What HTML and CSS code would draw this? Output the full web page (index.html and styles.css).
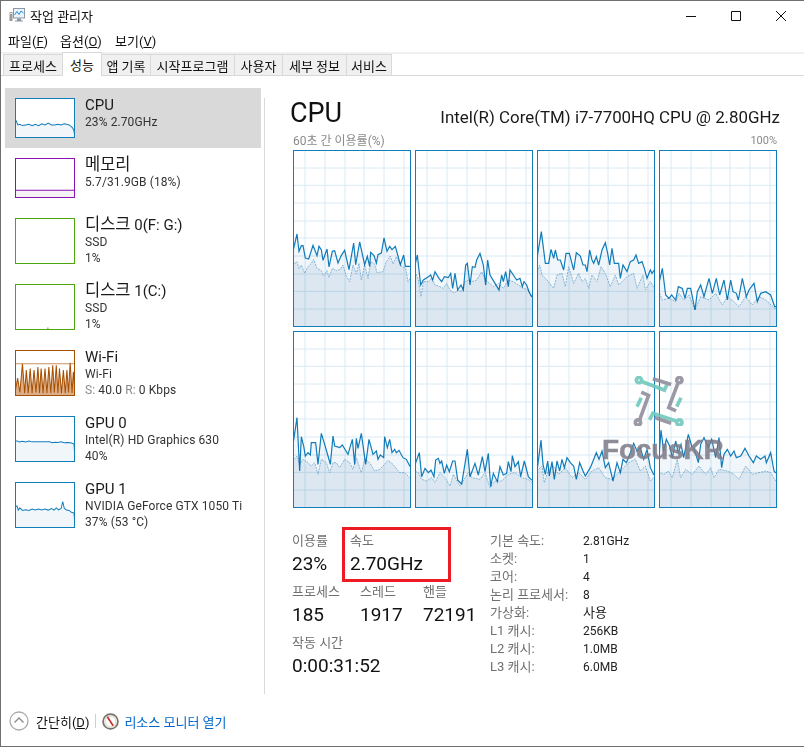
FILE: index.html
```
<!DOCTYPE html>
<html lang="ko">
<head>
<meta charset="utf-8">
<title>작업 관리자</title>
<link rel="stylesheet" href="styles.css">
</head>
<body>
<svg class="defs" aria-hidden="true"><defs><g id="grid" class="grid">
<path d="M36 0V531M96 0V531M156 0V531M213 0V531M273 0V531M333 0V531M0 54H354M0 106H354M0 159H354M0 213H354M0 264H354M0 318H354M0 372H354M0 424H354M0 477H354"/>
</g></defs></svg>
<div class="window">
  <header class="titlebar">
    <svg class="app-icon" viewBox="0 0 16 15"><rect x="0.5" y="4" width="3" height="9" fill="#9a9a9a"/><rect x="1" y="5" width="2" height="1" fill="#e8e8e8"/><rect x="4.5" y="0.5" width="11" height="9.5" fill="#eaf3fa" stroke="#8b98a3"/><path d="M5.5 7L8 3.5L10 6.5L12 3L14.5 5" fill="none" stroke="#2b8fd6"/><path d="M8 10.5h4v2h2v1H6v-1h2z" fill="#8b98a3"/></svg>
    <span class="title">작업 관리자</span>
    <div class="controls">
      <svg class="ctl" viewBox="0 0 10 10"><path d="M0 5.5H10"/></svg>
      <svg class="ctl" viewBox="0 0 10 10"><path d="M.5 .5H9.5V9.5H.5Z"/></svg>
      <svg class="ctl" viewBox="0 0 10 10"><path d="M0 0L10 10M10 0L0 10"/></svg>
    </div>
  </header>
  <nav class="menu"><span class="m1">파일(<u>F</u>)</span><span class="m2">옵션(<u>O</u>)</span><span>보기(<u>V</u>)</span></nav>
  <div class="tabs">
    <span class="tab t1">프로세스</span><span class="tab t2 active">성능</span><span class="tab t3">앱 기록</span><span class="tab t4">시작프로그램</span><span class="tab t5">사용자</span><span class="tab t6">세부 정보</span><span class="tab t7">서비스</span>
  </div>
  <main class="main">
    <aside class="side">
      <div class="item selected">
        <svg class="thumb blue short" viewBox="0 0 180 120" preserveAspectRatio="none"><polyline class="t-blue" points="-4,130 -4,68 0,68 6,82 12,80 20,84 30,82 40,80 50,84 60,80 70,84 80,78 90,82 100,76 110,82 120,82 130,80 140,82 150,78 165,82 175,90 180,100 184,130"/></svg>
        <div class="info"><div class="name">CPU</div><div class="sub">23% 2.70GHz</div></div>
      </div>
      <div class="item">
        <svg class="thumb purple short" viewBox="0 0 180 120" preserveAspectRatio="none"><rect x="-4" y="99" width="190" height="30" class="t-purple"/></svg>
        <div class="info"><div class="name"><span class="ko">메모리</span></div><div class="sub">5.7/31.9GB (18%)</div></div>
      </div>
      <div class="item">
        <svg class="thumb green" viewBox="0 0 180 138" preserveAspectRatio="none"></svg>
        <div class="info"><div class="name"><span class="ko">디스크</span> 0(F: G:)</div><div class="sub">SSD</div><div class="sub">1%</div></div>
      </div>
      <div class="item">
        <svg class="thumb green" viewBox="0 0 180 138" preserveAspectRatio="none"><path class="t-green" d="M99 138V133"/></svg>
        <div class="info"><div class="name"><span class="ko">디스크</span> 1(C:)</div><div class="sub">SSD</div><div class="sub">1%</div></div>
      </div>
      <div class="item">
        <svg class="thumb brown" viewBox="0 0 180 138" preserveAspectRatio="none"><path class="t-brown-line" d="M0 40H180"/><polyline class="t-brown" points="-4,145 -4,135 5,85 12,130 20,40 27,132 32,60 38,132 44,55 50,132 56,60 62,130 68,50 73,132 78,55 84,132 90,55 96,132 102,50 108,132 114,45 119,130 125,45 130,132 135,55 141,132 147,60 153,132 158,60 163,130 168,37 174,132 178,65 184,145"/></svg>
        <div class="info"><div class="name">Wi-Fi</div><div class="sub">Wi-Fi</div><div class="sub"><span class="dim">S:</span> 40.0 <span class="dim">R:</span> 0 Kbps</div></div>
      </div>
      <div class="item">
        <svg class="thumb blue" viewBox="0 0 180 138" preserveAspectRatio="none"><polyline class="t-blue" points="-4,145 -4,75 4,75 10,78 20,76 30,78 40,75 50,78 60,78 80,78 105,78 112,81 122,79 130,80 140,78 150,81 160,80 170,81 180,85 184,145"/></svg>
        <div class="info"><div class="name">GPU 0</div><div class="sub">Intel(R) HD Graphics 630</div><div class="sub">40%</div></div>
      </div>
      <div class="item">
        <svg class="thumb blue" viewBox="0 0 180 138" preserveAspectRatio="none"><polyline class="t-blue" points="-4,145 -4,75 3,72 7,85 12,78 20,86 30,84 40,86 50,82 60,85 70,82 80,85 90,82 100,85 110,80 118,85 125,78 132,84 140,80 145,58 150,80 157,85 165,86 172,92 180,94 184,145"/></svg>
        <div class="info"><div class="name">GPU 1</div><div class="sub">NVIDIA GeForce GTX 1050 Ti</div><div class="sub">37% (53 °C)</div></div>
      </div>
    </aside>
    <section class="panel">
      <div class="head"><h1>CPU</h1><span class="model">Intel(R) Core(TM) i7-7700HQ CPU @ 2.80GHz</span></div>
      <div class="axis"><span>60초 간 이용률(%)</span><span class="axis-max">100%</span></div>
      <div class="charts">
        <svg class="chart" viewBox="3 3 348 525"><use href="#grid"/>
          <polyline class="kernel" points="-6,540 -6,344 0,344 12,335 18,355 25,345 35,370 45,350 55,340 62,328 72,355 85,362 92,378 102,362 108,382 118,355 130,362 142,358 150,345 160,378 170,395 180,345 190,372 198,340 205,390 215,345 225,385 233,335 245,342 252,368 270,365 280,335 292,318 300,342 310,320 325,348 338,355 345,395 352,385 360,385 360,540"/>
          <polyline class="total" points="-6,540 -6,304 0,304 12,252 18,304 25,287 30,287 37,324 47,327 60,286 72,317 78,289 85,299 90,331 102,297 108,351 118,304 125,302 135,339 145,316 155,301 168,359 182,279 188,344 200,276 215,344 223,319 230,349 233,307 243,317 250,339 255,314 265,309 273,264 282,304 290,289 297,299 307,289 322,344 332,315 337,349 350,349 360,349 360,540"/></svg>
        <svg class="chart" viewBox="3 3 348 525"><use href="#grid"/>
          <polyline class="kernel" points="-6,540 -6,365 0,365 10,390 18,440 25,395 40,395 50,385 60,405 75,410 85,415 95,400 105,420 118,430 128,420 140,425 150,395 160,390 170,395 185,390 200,365 212,390 218,395 235,410 250,400 265,415 280,390 295,395 310,405 325,415 340,420 350,440 360,440 360,540"/>
          <polyline class="total" points="-6,540 -6,345 0,345 7,315 17,405 25,390 40,380 47,375 53,390 60,365 72,385 80,395 88,380 100,383 107,370 113,415 120,370 128,420 138,405 145,420 152,345 157,340 165,405 172,350 180,352 185,330 195,310 205,345 212,405 218,330 225,375 240,400 252,420 260,375 265,395 272,365 280,410 285,360 295,375 305,390 315,385 322,410 327,395 335,405 342,425 350,440 360,440 360,540"/></svg>
        <svg class="chart" viewBox="3 3 348 525"><use href="#grid"/>
          <polyline class="kernel" points="-6,540 -6,370 0,370 8,345 15,375 30,390 50,415 60,375 75,370 85,410 95,350 110,400 125,370 135,395 145,385 155,415 165,375 180,395 192,350 205,370 220,410 235,375 245,405 270,380 290,370 300,415 318,375 325,420 340,395 352,415 360,415 360,540"/>
          <polyline class="total" points="-6,540 -6,325 0,325 13,245 25,340 35,340 42,298 50,325 55,300 62,330 70,330 80,360 87,310 97,310 110,360 118,308 130,318 138,345 145,345 150,365 158,300 165,330 170,340 178,320 185,345 195,300 205,278 212,310 218,345 225,295 232,340 245,340 250,385 258,345 270,365 280,335 290,330 297,315 305,340 315,335 322,355 330,385 340,360 345,370 352,360 360,400 360,540"/></svg>
        <svg class="chart" viewBox="3 3 348 525"><use href="#grid"/>
          <polyline class="kernel" points="-6,540 -6,425 0,425 10,450 30,445 50,455 60,430 75,450 90,435 108,480 125,440 150,450 170,430 190,465 205,440 225,455 240,470 260,440 280,465 300,440 320,450 347,475 360,475 360,540"/>
          <polyline class="total" points="-6,540 -6,400 0,400 10,355 20,435 30,445 38,435 50,450 58,410 70,415 78,445 85,415 95,415 108,480 115,425 125,405 135,440 150,385 160,430 172,385 182,435 195,390 205,450 215,390 222,425 232,430 238,450 250,385 262,440 270,420 285,400 295,455 305,430 320,425 335,435 347,470 360,470 360,540"/></svg>
        <svg class="chart" viewBox="3 3 348 525"><use href="#grid"/>
          <polyline class="kernel" points="-6,540 -6,390 0,390 12,375 20,400 30,385 45,395 55,405 65,395 75,430 85,385 100,395 110,425 120,395 130,395 140,410 155,385 170,395 180,415 190,380 205,425 215,385 230,395 245,420 260,415 275,400 285,388 300,400 320,425 335,425 350,440 360,440 360,540"/>
          <polyline class="total" points="-6,540 -6,340 0,340 12,260 20,420 25,317 32,345 37,375 45,365 52,372 55,335 68,335 75,400 85,307 95,340 105,375 112,400 120,315 125,345 140,350 148,342 165,370 178,325 185,400 190,322 195,352 205,307 218,400 228,325 240,370 250,360 255,385 262,372 272,380 275,317 283,350 290,325 297,365 305,355 310,365 318,358 330,380 340,385 350,405 360,405 360,540"/></svg>
        <svg class="chart" viewBox="3 3 348 525"><use href="#grid"/>
          <polyline class="kernel" points="-6,540 -6,420 0,420 10,425 20,445 35,450 50,440 60,455 75,425 90,440 105,465 115,430 135,465 160,425 170,440 195,445 210,425 225,470 240,450 260,450 280,430 300,425 320,440 340,445 350,455 360,455 360,540"/>
          <polyline class="total" points="-6,540 -6,400 0,400 5,387 13,365 20,437 30,412 40,425 48,417 57,437 62,387 70,382 75,397 80,390 88,427 95,402 103,422 113,390 120,390 128,447 140,459 157,355 165,437 180,397 190,432 202,377 210,422 220,367 227,467 235,427 247,452 255,407 265,432 275,427 280,392 288,422 292,374 300,407 310,392 317,437 328,390 340,437 350,447 360,447 360,540"/></svg>
        <svg class="chart" viewBox="3 3 348 525"><use href="#grid"/>
          <polyline class="kernel" points="-6,540 -6,420 0,420 15,405 22,455 35,415 50,405 65,430 85,410 105,440 125,425 145,445 165,420 185,410 205,440 225,445 250,420 275,395 295,385 310,420 325,405 340,450 350,440 360,440 360,540"/>
          <polyline class="total" points="-6,540 -6,420 0,420 12,327 18,400 25,430 32,390 37,435 45,392 52,445 60,390 68,420 75,385 82,410 90,380 100,395 110,405 118,445 128,395 138,420 145,435 160,410 172,380 178,365 186,385 195,360 205,410 215,395 228,450 240,395 250,425 258,385 268,395 280,365 290,337 300,360 310,350 320,385 330,355 340,410 350,430 360,430 360,540"/></svg>
        <svg class="chart" viewBox="3 3 348 525"><use href="#grid"/>
          <polyline class="kernel" points="-6,540 -6,425 0,425 15,430 28,420 40,440 55,385 65,440 80,415 100,430 120,405 140,430 155,410 165,440 180,415 205,420 225,430 240,445 260,405 280,430 300,425 320,420 335,425 350,450 360,450 360,540"/>
          <polyline class="total" points="-6,540 -6,380 0,380 6,297 14,360 22,325 32,345 40,380 50,330 58,365 66,340 74,380 88,310 98,345 106,355 118,395 125,340 135,320 148,350 158,325 170,380 180,320 188,410 195,370 205,355 215,375 225,360 232,380 245,375 258,352 270,375 283,395 292,375 305,385 318,375 322,395 335,365 345,420 350,425 360,425 360,540"/></svg>
      </div>
      <div class="stats">
        <div class="stats-left">
          <div class="stat-row">
            <div class="stat w58"><div class="label">이용률</div><div class="value">23%</div></div>
            <div class="stat speed"><div class="label">속도</div><div class="value">2.70GHz</div></div>
          </div>
          <div class="stat-row">
            <div class="stat w68"><div class="label">프로세스</div><div class="value">185</div></div>
            <div class="stat w63"><div class="label">스레드</div><div class="value">1917</div></div>
            <div class="stat"><div class="label">핸들</div><div class="value">72191</div></div>
          </div>
          <div class="stat-row">
            <div class="stat"><div class="label">작동 시간</div><div class="value">0:00:31:52</div></div>
          </div>
        </div>
        <dl class="details">
          <dt>기본 속도:</dt><dd>2.81GHz</dd>
          <dt>소켓:</dt><dd>1</dd>
          <dt>코어:</dt><dd>4</dd>
          <dt>논리 프로세서:</dt><dd>8</dd>
          <dt>가상화:</dt><dd class="dd-ko">사용</dd>
          <dt>L1 캐시:</dt><dd>256KB</dd>
          <dt>L2 캐시:</dt><dd>1.0MB</dd>
          <dt>L3 캐시:</dt><dd>6.0MB</dd>
        </dl>
      </div>
    </section>
  </main>
  <footer class="footer">
    <svg class="chev" viewBox="0 0 20 20"><circle cx="10" cy="10" r="9" fill="#fff" stroke="#ababab" stroke-width="1.3"/><path d="M5.5 11.5L10 7L14.5 11.5" fill="none" stroke="#8a8a8a" stroke-width="1.4"/></svg>
    <span class="fewer">간단히(<u>D</u>)</span>
    <span class="sep"></span>
    <svg class="monitor" viewBox="0 0 16 16"><circle cx="8" cy="8" r="7" fill="#f4f1ec" stroke="#77736d" stroke-width="1.6"/><circle cx="8" cy="8" r="5" fill="#fff" stroke="#cfc8bd" stroke-width=".6"/><path d="M5 3.5L10.5 12" stroke="#c9302c" stroke-width="1.6"/></svg>
    <span class="link">리소스 모니터 열기</span>
  </footer>
  <div class="watermark">
    <svg class="wm-logo" viewBox="100 20 160 150">
      <g class="wm-teal"><circle cx="118" cy="32" r="8"/><path d="M126 36L195 62L204 42M245 85L232 112M125 85L112 112"/><circle cx="240" cy="160" r="8"/><path d="M232 156L160 132L150 152"/></g>
      <g class="wm-gray"><circle cx="240" cy="32" r="8"/><path d="M236 40L208 115L230 125M160 28L215 45"/><circle cx="115" cy="160" r="8"/><path d="M120 152L147 78L125 68M165 145L215 162"/></g>
    </svg>
    <span class="wm-text">FocusKR</span>
  </div>
</div>
</body>
</html>
```

FILE: styles.css
```
*, *::before, *::after { box-sizing: border-box; }
html, body { margin: 0; padding: 0; background: #fff; }
body { font-family: Roboto, "Noto Sans CJK KR", sans-serif; font-size: 12px; color: #1a1a1a; }
.defs { position: absolute; width: 0; height: 0; }
.grid path { fill: none; stroke: #d9eaf4; stroke-width: 1; vector-effect: non-scaling-stroke; }

.window { position: relative; width: 804px; height: 747px; border-top: 1px solid #6f6f6f; border-left: 1px solid #6f6f6f; border-bottom: 1px solid #6f6f6f; display: flex; flex-direction: column; overflow: hidden; }

.titlebar { height: 30px; flex: none; display: flex; align-items: center; padding: 0 0 1px 8px; }
.app-icon { width: 16px; height: 15px; margin-right: 5px; }
.title { font-size: 13px; color: #111; }
.controls { margin-left: auto; display: flex; gap: 35px; padding-right: 18px; }
.ctl { width: 10px; height: 10px; }
.ctl path { fill: none; stroke: #111; stroke-width: 1; }

.menu { height: 18px; flex: none; display: flex; padding-left: 7px; align-items: center; font-size: 13px; color: #111; }
.menu span { white-space: nowrap; }
.m1 { width: 52px; }
.m2 { width: 55px; }

.tabs { margin-top: 3px; height: 24px; flex: none; display: flex; align-items: flex-end; padding-left: 2px; border-top: 2px solid #f0f0f0; border-bottom: 1px solid #d9d9d9; position: relative; }
.tab { height: 21px; display: flex; align-items: center; justify-content: center; background: #f0f0f0; border: 1px solid #d9d9d9; border-bottom: none; margin-left: -1px; font-size: 13px; color: #111; white-space: nowrap; }
.tab.active { height: 24px; background: #fff; position: relative; margin-bottom: -1px; margin-top: -3px; z-index: 1; }
.t1 { width: 60px; margin-left: 0; }
.t2 { width: 40px; }
.t3 { width: 50px; }
.t4 { width: 85px; }
.t5 { width: 49px; }
.t6 { width: 65px; }
.t7 { width: 46px; }

.main { flex: none; height: 624px; display: flex; padding-top: 12px; }
.side { width: 263px; flex: none; padding-left: 4px; }
.item { width: 256px; display: flex; padding: 10px 0 10px 10px; }
.item.selected { background: #d9d9d9; }
.thumb { width: 60px; height: 46px; flex: none; border: 1px solid; background: #fff; margin-right: 10px; overflow: hidden; }
.thumb.short { height: 40px; }
.thumb.blue { border-color: #117dbb; }
.thumb.purple { border-color: #8b12ae; }
.thumb.green { border-color: #4da60c; }
.thumb.brown { border-color: #a74f01; }
.t-blue { fill: #f1f6fa; stroke: #117dbb; stroke-width: 1; vector-effect: non-scaling-stroke; }
.t-purple { fill: #f4f2f4; stroke: #8b12ae; stroke-width: 1; vector-effect: non-scaling-stroke; }
.t-green { stroke: #4da60c; stroke-width: 1; vector-effect: non-scaling-stroke; }
.t-brown { fill: #dcae88; stroke: #a74f01; stroke-width: 1; vector-effect: non-scaling-stroke; }
.t-brown-line { stroke: #c8915f; stroke-width: 1; vector-effect: non-scaling-stroke; }
.info { margin: -4px 0 -4px; white-space: nowrap; min-width: 0; }
.name { font-size: 15px; line-height: 22px; height: 20px; color: #1a1a1a; }
.name .ko { font-size: 16.5px; }
.sub { font-size: 12px; line-height: 16px; color: #333; letter-spacing: .1px; }
.dim { color: #8a8a8a; }

.panel { width: 515px; margin-top: 10px; height: 596px; border-left: 1px solid #d9d9d9; padding-left: 25px; flex: none; }
.head { display: flex; justify-content: space-between; align-items: flex-end; height: 28px; margin-top: 1px; width: 490px; }
.head h1 { margin: 0; font-weight: 400; font-size: 27px; line-height: 28px; color: #111; }
.model { font-size: 16.9px; line-height: 20px; color: #1a1a1a; white-space: nowrap; }
.axis { display: flex; justify-content: space-between; font-size: 12px; line-height: 14px; color: #8a8a8a; margin: 7px 0 0 3px; width: 484px; height: 16px; }
.axis-max { font-size: 11px; }

.charts { margin-left: 3px; display: grid; grid-template-columns: repeat(4, 118px); grid-auto-rows: 177px; gap: 4px; }
.chart { display: block; width: 118px; height: 177px; border: 1px solid #117dbb; background: #fff; }
.kernel { fill: #e9f0f6; mix-blend-mode: multiply; stroke: #8fbcd8; stroke-width: 1; stroke-dasharray: 2 1; vector-effect: non-scaling-stroke; }
.total { fill: #f1f6fa; mix-blend-mode: multiply; stroke: #117dbb; stroke-width: 1.2; vector-effect: non-scaling-stroke; }

.stats { display: flex; margin: 24px 0 0 2px; }
.stats-left { width: 198px; flex: none; }
.stat-row { display: flex; height: 51px; }
.stat { flex: none; }
.w58 { width: 58px; }
.w68 { width: 68px; }
.w63 { width: 63px; }
.speed { position: relative; }
.speed::after { content: ""; position: absolute; left: -8px; top: -5px; width: 109px; height: 55px; border: 3px solid #ed1c24; }
.label { font-size: 13px; line-height: 18px; color: #707070; }
.value { font-size: 19px; line-height: 28px; color: #111; white-space: nowrap; }
.details { margin: 0; display: grid; grid-template-columns: 93px auto; grid-auto-rows: 18px; align-items: center; align-self: flex-start; }
.details dt { color: #707070; font-size: 13px; line-height: 18px; }
.details dd { margin: 0; color: #222; font-size: 12px; line-height: 18px; }
.details .dd-ko { font-size: 13px; }

.footer { flex: 1; display: flex; align-items: center; padding: 0 0 4px 8px; position: relative; }
.chev { width: 20px; height: 20px; margin-right: 7px; }
.fewer { font-size: 13px; color: #111; }
.sep { width: 1px; height: 14px; background: #cfcfcf; margin: 0 6px; }
.monitor { width: 17px; height: 17px; margin-right: 5px; }
.link { font-size: 13px; color: #0066cc; }

.watermark { position: absolute; left: 601px; top: 375px; width: 124px; height: 88px; opacity: .88; pointer-events: none; display: flex; flex-direction: column; align-items: flex-start; }
.wm-logo { width: 53px; height: 50px; margin-left: 31px; flex: none; }
.wm-teal { fill: none; stroke: #6fc8bb; stroke-width: 11; }
.wm-gray { fill: none; stroke: #8e8c99; stroke-width: 11; }
.wm-text { font-family: "Liberation Sans", sans-serif; font-weight: 700; font-size: 28px; line-height: 30px; letter-spacing: -.2px; color: #7f7d8a; white-space: nowrap; margin-top: 9px; -webkit-text-stroke: .5px #7f7d8a; }
```
